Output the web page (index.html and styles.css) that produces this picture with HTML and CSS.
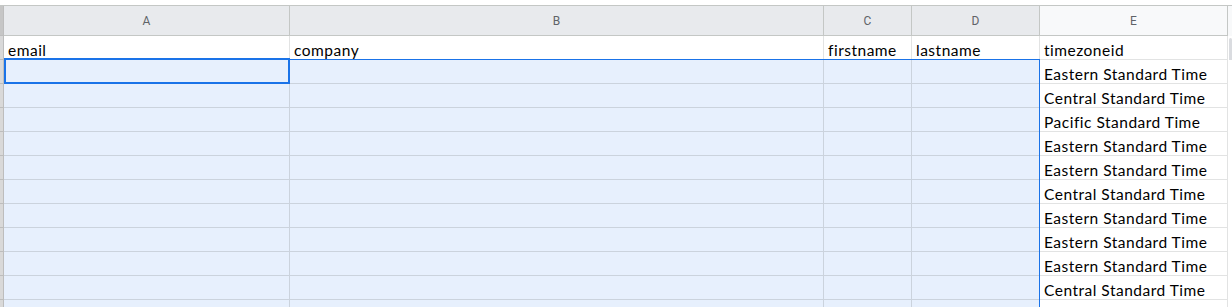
FILE: index.html
```html
<!DOCTYPE html>
<html lang="en">
<head>
  <meta charset="UTF-8">
  <title>Sheet</title>
  <link rel="stylesheet" href="styles.css">
</head>
<body>
  <div class="sheet">
    <div class="grid">
      <div class="rh top"></div>
      <div class="hd on">A</div>
      <div class="hd on">B</div>
      <div class="hd on">C</div>
      <div class="hd on">D</div>
      <div class="hd">E</div>
      <div class="hd edge"></div>

      <div class="rh"></div>
      <div class="cell">email</div>
      <div class="cell">company</div>
      <div class="cell">firstname</div>
      <div class="cell">lastname</div>
      <div class="cell">timezoneid</div>
      <div class="cell edge"><span class="thumb"></span></div>

      <div class="rh"></div><div class="cell sel"></div><div class="cell sel"></div><div class="cell sel"></div><div class="cell sel"></div><div class="cell">Eastern Standard Time</div><div class="cell edge"></div>
      <div class="rh"></div><div class="cell sel"></div><div class="cell sel"></div><div class="cell sel"></div><div class="cell sel"></div><div class="cell">Central Standard Time</div><div class="cell edge"></div>
      <div class="rh"></div><div class="cell sel"></div><div class="cell sel"></div><div class="cell sel"></div><div class="cell sel"></div><div class="cell">Pacific Standard Time</div><div class="cell edge"></div>
      <div class="rh"></div><div class="cell sel"></div><div class="cell sel"></div><div class="cell sel"></div><div class="cell sel"></div><div class="cell">Eastern Standard Time</div><div class="cell edge"></div>
      <div class="rh"></div><div class="cell sel"></div><div class="cell sel"></div><div class="cell sel"></div><div class="cell sel"></div><div class="cell">Eastern Standard Time</div><div class="cell edge"></div>
      <div class="rh"></div><div class="cell sel"></div><div class="cell sel"></div><div class="cell sel"></div><div class="cell sel"></div><div class="cell">Central Standard Time</div><div class="cell edge"></div>
      <div class="rh"></div><div class="cell sel"></div><div class="cell sel"></div><div class="cell sel"></div><div class="cell sel"></div><div class="cell">Eastern Standard Time</div><div class="cell edge"></div>
      <div class="rh"></div><div class="cell sel"></div><div class="cell sel"></div><div class="cell sel"></div><div class="cell sel"></div><div class="cell">Eastern Standard Time</div><div class="cell edge"></div>
      <div class="rh"></div><div class="cell sel"></div><div class="cell sel"></div><div class="cell sel"></div><div class="cell sel"></div><div class="cell">Eastern Standard Time</div><div class="cell edge"></div>
      <div class="rh"></div><div class="cell sel"></div><div class="cell sel"></div><div class="cell sel"></div><div class="cell sel"></div><div class="cell">Central Standard Time</div><div class="cell edge"></div>
      <div class="rh"></div><div class="cell sel"></div><div class="cell sel"></div><div class="cell sel"></div><div class="cell sel"></div><div class="cell"></div><div class="cell edge"></div>
    </div>

    <!-- selection outline and active cell sit on top of the grid -->
    <div class="range"></div>
    <div class="active"></div>
  </div>
</body>
</html>
```

FILE: styles.css
```css
body {
  margin: 0;
  background: #fff;
  overflow: hidden;
}
.sheet {
  position: relative;
  height: 307px;
  overflow: hidden;
  padding-top: 5px;
  box-sizing: border-box;
}
.grid {
  display: grid;
  grid-template-columns: 4px 286px 534px 88px 128px 188px 4px;
  grid-template-rows: 30px repeat(12, 24px);
  border-top: 1px solid #c4c7c5;
}
.grid > div {
  box-sizing: border-box;
}
.rh {
  background: #d9d9d9;
  border-right: 1px solid #bdbdbd;
  border-bottom: 1px solid #bdbdbd;
}
.rh.top {
  background: #c6c6c6;
}
.hd {
  background: #f8f9fa;
  border-right: 1px solid #c4c7c5;
  border-bottom: 1px solid #c4c7c5;
  font-family: Roboto, "Liberation Sans", sans-serif;
  font-size: 12px;
  color: #5f6368;
  display: flex;
  align-items: center;
  justify-content: center;
}
.hd.on {
  background: #e8eaed;
}
.cell {
  position: relative;
  background: #fff;
  border-right: 1px solid #e2e3e3;
  border-bottom: 1px solid #e2e3e3;
  font-family: Lato, "Noto Sans", sans-serif;
  font-size: 15.5px;
  letter-spacing: 0.5px;
  line-height: 15px;
  color: #000;
  padding: 0 3px 1px 4px;
  display: flex;
  align-items: flex-end;
  white-space: nowrap;
  overflow: hidden;
}
.cell.sel {
  background: #e7f0fd;
  border-right-color: #cbd3dd;
  border-bottom-color: #cbd3dd;
}
.edge {
  border-right: none;
  border-bottom: none;
}
.thumb {
  position: absolute;
  left: 1px;
  top: 2px;
  width: 3px;
  height: 34px;
  border-radius: 2px;
  background: #dadce0;
}
.range {
  position: absolute;
  left: 4px;
  top: 59px;
  width: 1036px;
  height: 300px;
  border: 1px solid #1a73e8;
  border-left: none;
  box-sizing: border-box;
}
.active {
  position: absolute;
  left: 4px;
  top: 58px;
  width: 286px;
  height: 26px;
  border: 2px solid #1a73e8;
  box-sizing: border-box;
}
```
